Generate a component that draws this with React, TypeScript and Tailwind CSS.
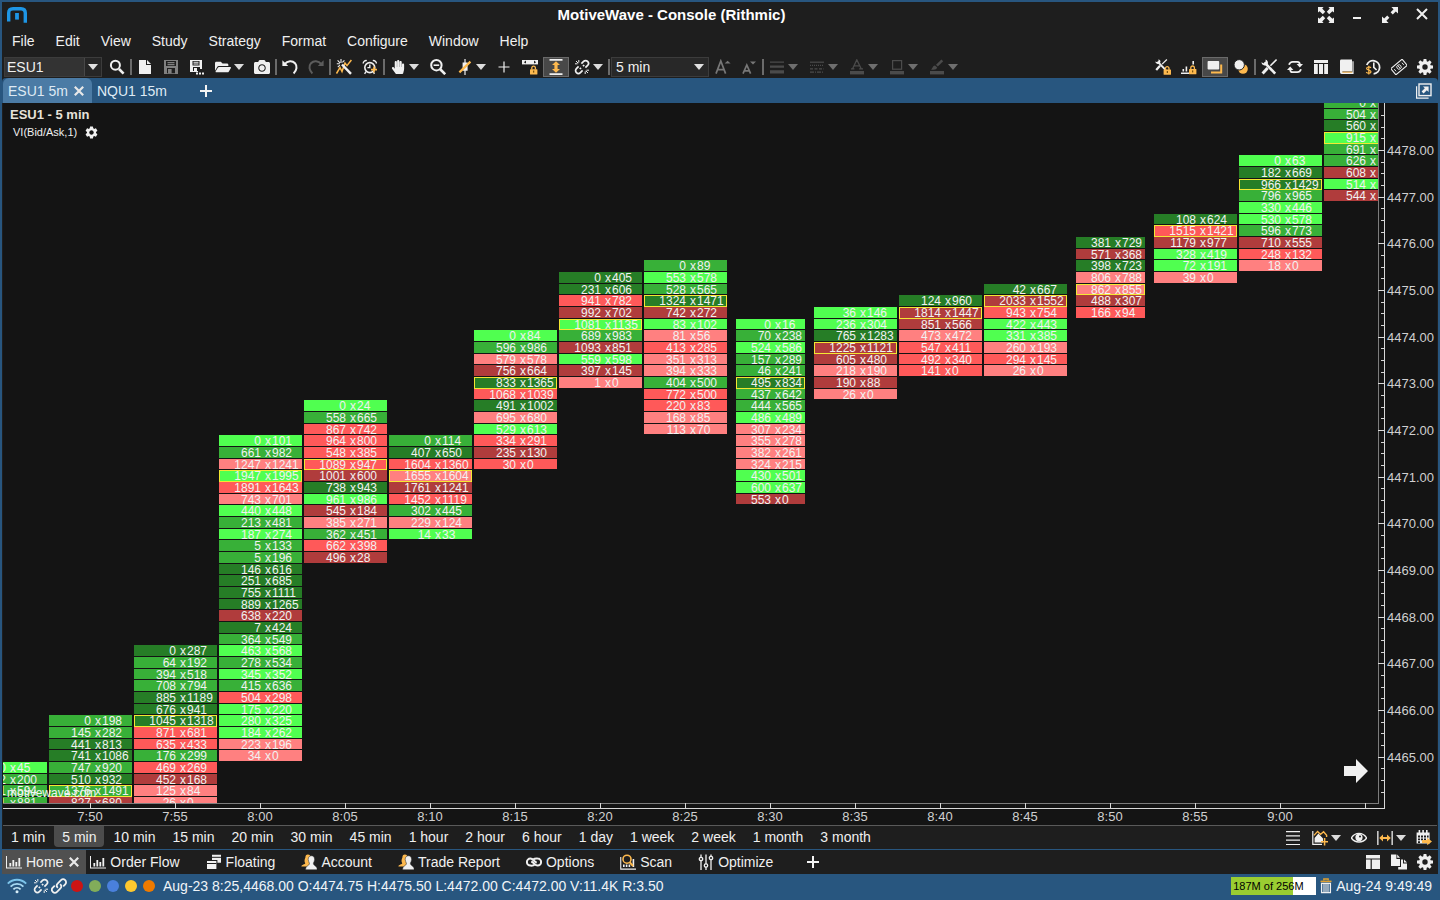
import React from 'react';
import { FaCamera, FaFolderOpen, FaHandPaper } from 'react-icons/fa';
import { MdSettings } from 'react-icons/md';

/* ------------------------------------------------------------------ data */

type Shade = 'B' | 'M' | 'D' | 'p' | 'r' | 'd';

const SHADES: Record<Shade, string> = {
  B: '#50ff50',
  M: '#38b038',
  D: '#267d26',
  p: '#ff8080',
  r: '#ff5959',
  d: '#b03c3c',
};

interface Bar {
  x: number;
  w?: number;
  row: number;
  cells: string;
}

// Each cell is "bid/ask/shade", followed by * on the row with the most volume.
const BARS: Bar[] = [
  { x: -39, row: 53, cells: '0/45/B 2/200/M 1/594/M 1/881/M' },
  { x: 46, row: 49, cells: '0/198/M 145/282/M 441/813/D 741/1086/D 747/920/M 510/932/D 1376/1491/M* 827/680/d' },
  {
    x: 131,
    row: 43,
    cells:
      '0/287/D 64/192/M 394/518/M 708/794/M 885/1189/D 676/941/D 1045/1318/D* 871/681/r 635/433/r 176/299/M 469/269/r 452/168/d 125/84/p 26/0/p',
  },
  {
    x: 216,
    row: 25,
    cells:
      '0/101/B 661/982/M 1247/1241/p 1947/1995/B* 1891/1643/r 743/701/p 440/448/B 213/481/M 187/274/B 5/133/M 5/196/M 146/616/D 251/685/D 755/1111/D 889/1265/D 638/220/d 7/424/D 364/549/M 463/568/B 278/534/M 345/352/B 415/636/M 504/298/r 175/220/B 280/325/B 184/262/B 223/196/p 34/0/p',
  },
  {
    x: 301,
    row: 22,
    cells:
      '0/24/B 558/665/M 867/742/r 964/800/r 548/385/r 1089/947/r* 1001/600/d 738/943/D 961/986/B 545/184/d 385/271/p 362/451/M 662/398/r 496/28/d',
  },
  {
    x: 386,
    row: 25,
    cells: '0/114/M 407/650/D 1604/1360/r 1655/1604/p* 1761/1241/d 1452/1119/r 302/445/M 229/124/p 14/33/B',
  },
  {
    x: 471,
    row: 16,
    cells:
      '0/84/B 596/986/M 579/578/p 756/664/d 833/1365/D* 1068/1039/r 491/1002/D 695/680/p 529/613/B 334/291/r 235/130/d 30/0/r',
  },
  {
    x: 556,
    row: 11,
    cells: '0/405/D 231/606/D 941/782/r 992/702/d 1081/1135/B* 689/983/M 1093/851/d 559/598/B 397/145/d 1/0/p',
  },
  {
    x: 641,
    row: 10,
    cells:
      '0/89/M 553/578/B 528/565/M 1324/1471/D* 742/272/d 83/102/B 81/56/p 413/285/r 351/313/p 394/333/p 404/500/M 772/500/r 220/83/r 168/85/p 113/70/p',
  },
  {
    x: 733,
    w: 69,
    row: 15,
    cells:
      '0/16/B 70/238/M 524/586/B 157/289/M 46/241/M 495/834/D* 437/642/M 444/565/M 486/489/B 307/234/p 355/278/p 382/261/p 324/215/p 430/501/B 600/637/B 553/0/d',
  },
  { x: 811, row: 14, cells: '36/146/B 236/304/B 765/1283/D 1225/1121/d* 605/480/d 218/190/p 190/88/d 26/0/p' },
  { x: 896, row: 13, cells: '124/960/D 1814/1447/d* 851/566/d 473/472/p 547/411/r 492/340/r 141/0/r' },
  { x: 981, row: 12, cells: '42/667/D 2033/1552/d* 943/754/r 422/443/B 331/385/B 260/193/p 294/145/r 26/0/p' },
  { x: 1073, w: 69, row: 8, cells: '381/729/D 571/368/d 398/723/D 806/788/p 862/855/p* 488/307/d 166/94/r' },
  { x: 1151, row: 6, cells: '108/624/D 1515/1421/r* 1179/977/d 328/419/B 72/191/B 39/0/p' },
  {
    x: 1236,
    row: 1,
    cells: '0/63/B 182/669/D 966/1429/D* 796/965/M 330/446/B 530/578/B 596/773/M 710/555/d 248/132/r 18/0/p',
  },
  { x: 1321, row: -4, cells: '0//M 504//M 560//D 915//B* 691//M 626//M 608//d 514//B 544//d' },
];

const rowTop = (row: number) => Math.floor(41.1 + (row * 35) / 3);
const rowLine = (row: number) => Math.round(47 + (row * 35) / 3);

const TIMES = ['7:50', '7:55', '8:00', '8:05', '8:10', '8:15', '8:20', '8:25', '8:30', '8:35', '8:40', '8:45', '8:50', '8:55', '9:00', ''];
const INTERVALS = ['1 min', '5 min', '10 min', '15 min', '20 min', '30 min', '45 min', '1 hour', '2 hour', '6 hour', '1 day', '1 week', '2 week', '1 month', '3 month'];
const MENUS = ['File', 'Edit', 'View', 'Study', 'Strategy', 'Format', 'Configure', 'Window', 'Help'];

/* ----------------------------------------------------------------- icons */

const LIGHT = '#f0f0f0';
const AMBER = '#fdb94e';
const DIM = '#4b4b4b';

function Svg({ children, size = 16, color = LIGHT }: { children: React.ReactNode; size?: number; color?: string }) {
  return (
    <svg width={size} height={size} viewBox="0 0 16 16" fill={color} stroke="none" className="shrink-0" aria-hidden="true">
      {children}
    </svg>
  );
}

function Gear() {
  return (
    <Svg>
      <circle cx="8" cy="8" r="4.3" fill="none" stroke={LIGHT} strokeWidth="3.2" />
      {[0, 45, 90, 135, 180, 225, 270, 315].map((a) => (
        <path key={a} d="M6.2 3 L6.6 0 H9.4 L9.8 3Z" transform={`rotate(${a} 8 8)`} />
      ))}
    </Svg>
  );
}

function Caret({ color = '#e0e0e0' }: { color?: string }) {
  return (
    <svg width="10" height="6" viewBox="0 0 10 6" fill={color} className="shrink-0" aria-hidden="true">
      <path d="M0 0H10L5 6Z" />
    </svg>
  );
}

function CloseMark({ color = '#e8e8e8' }: { color?: string }) {
  return (
    <svg width="10" height="10" viewBox="0 0 10 10" fill="none" stroke={color} strokeWidth="2.2" className="shrink-0" aria-hidden="true">
      <path d="M0.8 0.8L9.2 9.2M9.2 0.8L0.8 9.2" />
    </svg>
  );
}

function PlusMark() {
  return (
    <svg width="12" height="12" viewBox="0 0 12 12" fill="#f4f4f4" aria-hidden="true">
      <path d="M5 0h2v5h5v2H7v5H5V7H0V5h5z" />
    </svg>
  );
}

const Lock = ({ x = 8, y = 7 }: { x?: number; y?: number }) => (
  <g transform={`translate(${x} ${y})`}>
    <path d="M1.8 4V2.4a1.8 1.8 0 0 1 3.6 0V4" fill="none" stroke={AMBER} strokeWidth="1.3" />
    <rect x="0" y="3.6" width="7.4" height="5.2" rx="0.5" fill={AMBER} />
    <rect x="3.2" y="5" width="1" height="2" fill="#5a3b00" />
  </g>
);

const WifiIcon = () => (
  <svg width="20" height="16" viewBox="0 0 20 16" fill="none" strokeWidth="1.900" className="shrink-0" aria-hidden="true">
    <path d="M0.800 5.600C6 0.400 14 0.400 19.200 5.600" stroke="#7cc4ea" />
    <path d="M3.600 8.600C7.200 5 12.800 5 16.400 8.600" stroke="#a6d8f2" />
    <path d="M6.400 11.400C8.500 9.300 11.500 9.300 13.600 11.400" stroke="#c4e6f6" />
    <circle cx="10" cy="13.800" r="1.500" fill="#d8eef8" />
  </svg>
);
const BrokenLinkIcon = () => (
  <Svg>
    <g fill="none" stroke={LIGHT} strokeWidth="1.700">
      <path d="M7.400 4.600L9.600 2.400A2.700 2.700 0 0 1 13.600 6.400L11.400 8.600" />
      <path d="M10.200 6L9 7.200" />
      <path d="M8.600 11.400L6.400 13.600A2.700 2.700 0 0 1 2.400 9.600L4.600 7.400" />
      <path d="M5.800 10L7 8.800" />
      <path d="M4.800 1v2.600M1 4.800h2.600M2 2l2.200 2.200M11.200 12.400V15M12.400 11.200H15M11.800 11.800L14 14" strokeWidth="1" />
    </g>
  </Svg>
);
const LinkIcon = () => (
  <Svg>
    <g fill="none" stroke={LIGHT} strokeWidth="1.800">
      <path d="M6.800 9.800C5.200 8.200 5.400 6.800 6.600 5.600L10 2.200A2.900 2.900 0 0 1 14.200 6.400L12.200 8.400" />
      <path d="M9.200 6.200C10.800 7.800 10.600 9.200 9.400 10.400L6 13.800A2.900 2.900 0 0 1 1.800 9.600L3.800 7.600" />
    </g>
  </Svg>
);
const SearchIcon = () => (
  <Svg>
    <path d="M10 10L14.6 14.6" stroke={LIGHT} strokeWidth="2.6" />
    <circle cx="6.4" cy="6.2" r="4.5" fill="none" stroke={LIGHT} strokeWidth="2" />
  </Svg>
);
const ZoomOutIcon = () => (
  <Svg>
    <path d="M10 10L15.2 15.2" stroke={LIGHT} strokeWidth="2.6" />
    <circle cx="6.4" cy="6.2" r="5.2" fill="none" stroke={LIGHT} strokeWidth="2" />
    <path d="M3.6 5.4h5.6v1.6H3.6z" />
  </Svg>
);
const FileIcon = () => (
  <Svg>
    <path d="M2 1h7v5h5v9H2z" />
    <path d="M10 1l4 4h-4z" />
  </Svg>
);
const SaveIcon = () => (
  <Svg color="#808080">
    <path d="M1 1h14v14H1zM3 2v5h10V2zM4 9v5.2h8V9z" fillRule="evenodd" />
    <path d="M4.5 3h7v1.2h-7zM4.5 5h7v1.2h-7zM5 10h3.6v4.4H5z" />
  </Svg>
);
const SaveAsIcon = () => (
  <Svg>
    <path d="M1 1h12v9h-2V8H4v4h5v1H1zM3.5 2v4.4h7V2z" fillRule="evenodd" />
    <path d="M4.5 2.8h5v1h-5zM4.5 4.6h5v1h-5zM5 9h3v3.4H5zM7 13.5h2v2H7zM10 13.5h2v2h-2zM13 13.5h2v2h-2z" />
  </Svg>
);
const UndoIcon = ({ flip = false }: { flip?: boolean }) => (
  <Svg color={flip ? '#5c5c5c' : LIGHT}>
    <g transform={flip ? 'translate(16 0) scale(-1 1)' : undefined}>
      <path d="M0.4 1.200V7H6.2Z" />
      <path d="M2.600 5.200C5.600 1.400 10.400 1.400 13 4.200 15.400 7 15 11.400 11.600 14.400" fill="none" stroke={flip ? '#5c5c5c' : LIGHT} strokeWidth="2" />
    </g>
  </Svg>
);
const WizardIcon = () => (
  <Svg>
    <path d="M0.5 14.5L4 8.5l2 4L9 4l2 2.6L15.4 1" fill="none" stroke={AMBER} strokeWidth="1.5" />
    <path d="M6 5.5L15 14.8" stroke={LIGHT} strokeWidth="2.5" />
    <path d="M5 0v4M0.8 4.8h3M1.6 1.4l2.4 2.4M8.4 1.4L6.4 3.4M1.8 8.2l2-2" stroke={LIGHT} strokeWidth="1.1" />
  </Svg>
);
const AlarmIcon = () => (
  <Svg>
    <g fill="none" stroke={LIGHT}>
      <circle cx="7.8" cy="8.6" r="5" strokeWidth="1.6" />
      <path d="M7.8 5.6v3H5.4M1.2 4.6A3 3 0 0 1 4.8 1.6M10.8 1.6a3 3 0 0 1 3.6 3M4 12.6l-1.4 2.2M11.4 13l1 1.8" strokeWidth="1.4" />
    </g>
    <path d="M12 7.6v6M9 10.6h6" stroke={AMBER} strokeWidth="1.6" />
  </Svg>
);
const CandleIcon = () => (
  <Svg>
    <path d="M7.4 0h1.2v16H7.4zM5.6 3.4h5v8.4h-5z" />
    <path d="M2.4 13.4L13.4 2.6" stroke={AMBER} strokeWidth="2.2" />
  </Svg>
);
const CrossIcon = () => (
  <Svg>
    <path d="M7.4 2.5h1.2v4.9h4.9v1.2H8.6v4.9H7.4V8.6H2.5V7.4h4.9z" />
  </Svg>
);
const ScaleLockIcon = () => (
  <Svg>
    <rect x="0" y="1" width="16" height="4.4" />
    <path d="M4 1.6v3L1.8 3.2zM12 1.6v3l2.2-1.4z" fill="#1e1e1e" />
    <Lock x={8} y={6.6} />
  </Svg>
);
const FitHeightIcon = () => (
  <Svg>
    <path d="M1.5 0h13v1.8h-13zM1.5 14.2h13V16h-13z" />
    <path d="M8 2.2L12 6H9.6v4H12L8 13.8 4 10h2.4V6H4z" fill={AMBER} />
  </Svg>
);
const LetterUp = ({ down = false }: { down?: boolean }) => (
  <Svg color="#777777">
    <path d={down ? 'M2 14.6L5.8 6L9.6 14.6M3.4 11.8h4.8' : 'M1 14.6L5.8 2L10.6 14.6M2.6 10.6h6.6'} fill="none" stroke="#777777" strokeWidth="1.7" />
    <path d={down ? 'M9 2.6h6L12 5.4z' : 'M9.6 4.4h6L12.6 1.8z'} />
  </Svg>
);
const WidthIcon = () => (
  <Svg color={DIM}>
    <path d="M1 2.6h14v1.2H1zM1 6.6h14v2.2H1zM1 11.2h14v3.4H1z" />
  </Svg>
);
const DashIcon = () => (
  <Svg color={DIM}>
    <path d="M1 2.6h14v1.2H1z" />
    <path d="M1 6.4h14" stroke={DIM} strokeWidth="1.2" strokeDasharray="1 1" />
    <path d="M1 9.8h14" stroke={DIM} strokeWidth="1.2" strokeDasharray="3 1.5" />
    <path d="M1 13.2h14" stroke={DIM} strokeWidth="1.2" strokeDasharray="4 1 1 1" />
  </Svg>
);
const FontColorIcon = () => (
  <Svg color={DIM}>
    <path d="M3.6 9.8L7.8 0.8L12.2 9.8M5.2 6.8h5.2M2 9.8h3.4M10.2 9.8H14" fill="none" stroke={DIM} strokeWidth="1.3" />
    <path d="M1 12h14v3.4H1z" />
  </Svg>
);
const FillColorIcon = () => (
  <Svg color={DIM}>
    <rect x="3.6" y="1.6" width="9" height="8.6" fill="none" stroke={DIM} strokeWidth="1.2" />
    <path d="M1 12h14v3.4H1z" />
  </Svg>
);
const BrushColorIcon = () => (
  <Svg color={DIM}>
    <path d="M12.400 0.400L14.200 2.200 8.800 7.400 7 5.800z" />
    <path d="M6 6.600L8.200 8.600C7.400 11 4.600 11 2 10.400 3.800 9.600 3.600 6.800 6 6.600z" />
    <path d="M1 12h14v3.4H1z" />
  </Svg>
);
const Crossed = () => (
  <>
    <path d="M3.4 3.4L14.2 14.6" stroke={LIGHT} strokeWidth="2.6" />
    <path d="M0.4 3.2A3.6 3.6 0 0 0 6.6 5.4 3.6 3.6 0 0 0 4.6 0.4V3L3 4.4Z" />
    <path d="M15.6 0.6L9.4 6.8" stroke={LIGHT} strokeWidth="1.6" />
    <path d="M6.6 9L1.6 14.4" stroke={LIGHT} strokeWidth="3" />
  </>
);
const ToolsIcon = () => (
  <Svg>
    <Crossed />
  </Svg>
);
const ToolsLockIcon = () => (
  <Svg>
    <g transform="scale(0.76)">
      <Crossed />
    </g>
    <Lock x={8.6} y={7} />
  </Svg>
);
const BarsLockIcon = () => (
  <Svg>
    <path d="M0 13.6h8V15H0zM1.5 10h1.6v2.6H1.5zM4.6 7.4h1.6v5.2H4.6zM11.4 2H13v3.4h-1.6z" />
    <Lock x={8} y={6.4} />
  </Svg>
);
const LayersIcon = () => (
  <Svg>
    <path d="M4 12.4h9.2V5.4h2v9H4z" fill={AMBER} />
    <rect x="0.6" y="2" width="11.6" height="8.6" rx="0.8" />
  </Svg>
);
const CirclesIcon = () => (
  <Svg>
    <circle cx="10" cy="10" r="4.8" fill={AMBER} />
    <circle cx="6.2" cy="5.8" r="5.2" stroke="#1e1e1e" strokeWidth="1" />
  </Svg>
);
const SyncIcon = () => (
  <Svg>
    <path d="M2 5.800C2.800 3.600 4 2.800 5.600 2.800H10.400C12 2.800 12.800 3.600 12.800 5.600M14 10.200C13.200 12.400 12 13.200 10.400 13.200H5.600C4 13.200 3.200 12.400 3.200 10.400" fill="none" stroke={LIGHT} strokeWidth="1.8" />
    <path d="M9.600 5h6.400L12.800 8.600zM0 11h6.400L3.200 7.400z" />
  </Svg>
);
const ColumnsIcon = () => (
  <Svg>
    <path d="M1 1h14v3H1zM1 5h3.8v10H1zM6 5h4v10H6zM11.2 5H15v10h-3.8z" />
  </Svg>
);
const BookIcon = () => (
  <Svg>
    <path d="M2.4 0.6H13v11.8H3.4v0.8h10V2.2h1.2V15H2.6A1.8 1.8 0 0 1 1 13.2V2A1.4 1.4 0 0 1 2.4 0.6z" />
    <path d="M3.4 13.2h9.8" stroke={AMBER} strokeWidth="1" />
  </Svg>
);
const ClockMoneyIcon = () => (
  <Svg>
    <path d="M1.800 6A6.6 6.6 0 1 1 8.6 14.8" fill="none" stroke={LIGHT} strokeWidth="1.8" />
    <path d="M8.8 3.6v4.8l2.8 2.6" fill="none" stroke={LIGHT} strokeWidth="1.6" />
    <path d="M6 8.8C4.6 7.4 1.6 7.8 1.6 9.4c0 2 4.4 1.4 4.4 3.4 0 1.6-3.2 2-4.8.4M3.8 6.8V15.6" fill="none" stroke={AMBER} strokeWidth="1.2" />
  </Svg>
);
const MoneyIcon = () => (
  <Svg>
    <g transform="rotate(-40 8 8)" fill="none" stroke={LIGHT}>
      <rect x="0.600" y="4" width="14.800" height="8" strokeWidth="1.1" />
      <circle cx="8" cy="8" r="2.2" strokeWidth="0.900" />
      <path d="M3 6.600v2.800M13 6.600v2.800M8 6.4v3.2" strokeWidth="0.9" />
    </g>
  </Svg>
);
const BarChartIcon = () => (
  <Svg>
    <path d="M0 2h1v11.6h15v1H0zM3.4 9h1.8v3.4H3.4zM6.4 6h1.8v6.4H6.4zM9.4 8h1.8v4.4H9.4zM12.4 4h1.8v8.4h-1.8z" />
  </Svg>
);
const FloatingIcon = () => (
  <Svg>
    <path d="M6 0.800h9v8h-3.600V6H6z" />
    <path d="M6 2.800h9v1H6z" fill="#1e1e1e" />
    <path d="M1 7h9.4v8H1z" />
    <path d="M1 9h9.4v1H1z" fill="#1e1e1e" />
  </Svg>
);
const AccountIcon = () => (
  <Svg>
    <path d="M6.800 0.400C9 0.400 9.800 1.800 9.600 3.800 9.400 5 8.600 5.600 8.600 6.600V11L7 12.600H0.400C0.600 10.200 4.200 10.600 4.200 9.200 4 8 2.800 7.200 4.400 3.400 4.400 1.600 5.200 .4 6.800 .4z" fill={AMBER} />
    <path d="M10.400 1.800c2 0 3.200 1.400 3.200 3.600 0 1.800-1 2.800-1.200 4 .2 2.800 3.800 1.800 3.800 6.400H4.600c0-4.600 3.600-3.600 3.800-6.400-.2-1.200-1.200-2.200-1.200-4 0-2.200 1.200-3.600 3.200-3.600z" stroke="#1e1e1e" strokeWidth="0.500" />
  </Svg>
);
const OptionsIcon = () => (
  <Svg>
    <g fill="none" stroke={LIGHT} strokeWidth="2">
      <path d="M8.800 10.600C7.600 11.600 6 11.800 4.400 11.600A3.500 3.500 0 0 1 4.400 4.600C7.400 4.600 8 8.200 10.800 8.400" />
      <path d="M7.200 5.600C8.400 4.600 10 4.400 11.600 4.600A3.500 3.500 0 0 1 11.600 11.600C8.600 11.600 8 8 5.200 7.800" />
    </g>
  </Svg>
);
const ScanIcon = () => (
  <Svg>
    <path d="M0.200 3h1.100v11.600H16v1.200H0.200zM3 10.500h1.600V13H3zM5.800 10.500h1.600V13H5.800zM8.600 10.500h1.600V13H8.600zM12.600 5h1.600v8h-1.600z" />
    <circle cx="7" cy="5.200" r="4" fill="none" stroke={AMBER} strokeWidth="1.600" />
    <path d="M9.600 8.200L13 12" stroke={AMBER} strokeWidth="2" />
  </Svg>
);
const SlidersIcon = () => (
  <Svg>
    <g fill="none" stroke={LIGHT} strokeWidth="1.300">
      <path d="M3 0.500v3M3 7v9M8 0.500v9.500M8 13v3M13 0.500v2M13 6v10" />
      <circle cx="3" cy="5" r="1.700" />
      <circle cx="8" cy="11.500" r="1.700" />
      <circle cx="13" cy="4" r="1.700" />
    </g>
  </Svg>
);
const LayoutIcon = () => (
  <Svg>
    <path d="M1 1h14v3.400H1zM1 5.600h4.600V15H1zM6.800 5.600H15V15H6.800z" />
  </Svg>
);
const PagesIcon = () => (
  <Svg>
    <path d="M0 0.600h5.400V5H9v7H0z" />
    <path d="M6.200 0.600L9 3.800H6.200z" />
    <path d="M10 5.400h2V9.400h4V15.600H7.200V13H10z" />
    <path d="M13 5.400L16 8.400h-3z" />
  </Svg>
);
const ListIcon = () => (
  <Svg>
    <path d="M0 1h14v1.200H0zM0 5.300h14v1.200H0zM0 9.600h14v1.200H0zM0 13.900h14v1.200H0z" />
  </Svg>
);
const AddChartIcon = () => (
  <Svg>
    <path d="M0.200 1h1.200v12.800H10V15H0.200zM2.600 12.600V8L6.400 3.600 11 8.400V12.600z" />
    <path d="M2 5.400L5.600 1.400l3 3 3-2.600 3 3.400V7" fill="none" stroke={AMBER} strokeWidth="1.400" />
    <path d="M12.600 8v7.400M9 11.700h7" stroke={AMBER} strokeWidth="1.500" />
  </Svg>
);
const EyeIcon = () => (
  <Svg>
    <path d="M0.400 8C4 1.800 12 1.800 15.600 8 12 13.400 4 13.400 0.400 8z" fill="none" stroke={LIGHT} strokeWidth="1.400" />
    <circle cx="8" cy="7.400" r="3.600" />
    <circle cx="9" cy="6.400" r="1" fill="#1e1e1e" />
  </Svg>
);
const SpanIcon = () => (
  <Svg>
    <path d="M0.200 1h1.300v14H0.200zM14.500 1h1.300v14h-1.300z" />
    <path d="M2.200 8L6 4.400V7h4V4.400L13.800 8 10 11.600V9H6v2.600z" fill={AMBER} />
  </Svg>
);
const CalendarIcon = () => (
  <Svg>
    <path d="M0.600 2.400h13V13.600h-13z M2 5.600v1.800h2V5.600zM5 5.600v1.800h2V5.600zM8 5.600v1.800h2V5.600zM11 5.600v1.800h1.600V5.600zM2 8.400v1.800h2V8.400zM5 8.400v1.800h2V8.400zM8 8.400v1.800h2V8.400zM2 11.200V13h2v-1.800z" fillRule="evenodd" />
    <path d="M2.600 0h1.600v3H2.600zM6.300 0h1.600v3H6.300zM10 0h1.600v3H10z" />
    <path d="M6 10h5.200V7.800L16 11.500l-4.800 3.700V13H6z" fill={AMBER} />
  </Svg>
);
const PopOutIcon = () => (
  <Svg>
    <path d="M0.600 3.200V15.200H12.600" fill="none" stroke={LIGHT} strokeWidth="1.200" />
    <rect x="3" y="1" width="12" height="11.600" fill="none" stroke={LIGHT} strokeWidth="1.400" />
    <path d="M7 3.400h5.600V9L10.800 7.200 7.600 10.400 5.600 8.400 8.800 5.200z" />
  </Svg>
);
const TrashIcon = () => (
  <svg width="12" height="16" viewBox="0 0 12 16" aria-hidden="true">
    <path d="M3.800 2.500V1h4.400v1.500" fill="none" stroke="#e0a030" strokeWidth="1.300" />
    <rect x="0.500" y="2.600" width="11" height="1.600" fill="#e0a030" />
    <path d="M1.600 5.400h8.800V14.600H1.600z" fill="none" stroke="#f0f0f0" strokeWidth="1.300" />
    <path d="M4 6v8M6 6v8M8 6v8" stroke="#f0f0f0" strokeWidth="1.100" />
  </svg>
);

/* -------------------------------------------------------------- controls */

function Tool({ label, children, active = false }: { label: string; children: React.ReactNode; active?: boolean }) {
  return (
    <button
      type="button"
      aria-label={label}
      className={
        active
          ? 'flex h-5 w-[26px] shrink-0 items-center justify-center border border-[#6a6a6a] bg-[#484848] text-[#f0f0f0]'
          : 'flex h-5 w-[26px] shrink-0 items-center justify-center text-[#f0f0f0]'
      }
    >
      {children}
    </button>
  );
}

function DropTool({ label, children, dim = false }: { label: string; children: React.ReactNode; dim?: boolean }) {
  return (
    <button type="button" aria-label={label} className="flex h-5 w-[39px] shrink-0 items-center gap-[3px] pl-[5px] text-[#f0f0f0]">
      {children}
      <Caret color={dim ? '#6e6e6e' : '#dcdcdc'} />
    </button>
  );
}

const Separator = () => <div className="h-4 w-[2px] shrink-0 bg-[#6b6b6b]" />;

/* ---------------------------------------------------------------- header */

function TitleBar() {
  return (
    <header className="flex h-[26px] shrink-0 items-center">
      <div className="w-[31px] pl-[5px]">
        <svg width="20" height="16" viewBox="0 0 20 16" fill="none" stroke="#1e96e6" strokeWidth="3.400" aria-hidden="true">
          <path d="M1.700 14.600V6Q1.700 1.700 6 1.700H14Q18.300 1.700 18.300 6V15.800" />
          <path d="M10 6V12.600" strokeWidth="3.800" />
        </svg>
      </div>
      <h1 className="flex-1 text-center text-[15px] font-bold text-white">MotiveWave - Console (Rithmic)</h1>
      <div className="flex w-32 items-center justify-end gap-4 pr-2">
        <button type="button" aria-label="Full screen">
          <Svg>
            {[0, 90, 180, 270].map((a) => (
              <path key={a} d="M0 0h5.600L4.200 1.600 7.200 4.800 4.800 7.200 1.600 4.200 0 5.600z" transform={`rotate(${a} 8 8)`} />
            ))}
          </Svg>
        </button>
        <button type="button" aria-label="Minimize">
          <Svg>
            <path d="M3 10h8v2H3z" />
          </Svg>
        </button>
        <button type="button" aria-label="Maximize">
          <Svg>
            <path d="M9.400 0H16V6.600L13.800 4.400 10.800 7.400 8.600 5.200 11.600 2.200zM6.600 16H0V9.400L2.200 11.600 5.200 8.600 7.400 10.800 4.400 13.800z" />
          </Svg>
        </button>
        <button type="button" aria-label="Close">
          <Svg>
            <path d="M3 2L13 12M13 2L3 12" stroke={LIGHT} strokeWidth="2" />
          </Svg>
        </button>
      </div>
    </header>
  );
}

function MenuBar() {
  return (
    <nav className="flex h-[26px] shrink-0 items-center gap-[21px] pl-[10px] text-sm text-[#f0f0f0]">
      {MENUS.map((m) => (
        <button key={m} type="button">
          {m}
        </button>
      ))}
    </nav>
  );
}

function Toolbar() {
  return (
    <div className="flex h-6 shrink-0 items-center pt-[2px] pl-[2px]">
      <div className="mr-[2px] flex h-5 w-[98px] shrink-0 items-stretch border border-[#3c3c3c] bg-[#333333]">
        <input aria-label="Instrument" defaultValue="ESU1" className="w-[79px] min-w-0 bg-transparent pl-[2px] text-sm text-[#f0f0f0] outline-none" />
        <button type="button" aria-label="Recent instruments" className="flex flex-1 items-center justify-center border-l border-[#484848] bg-[#262626]">
          <Caret />
        </button>
      </div>
      <Tool label="Search"><SearchIcon /></Tool>
      <Separator />
      <Tool label="New"><FileIcon /></Tool>
      <Tool label="Save"><SaveIcon /></Tool>
      <Tool label="Save as"><SaveAsIcon /></Tool>
      <DropTool label="Open"><FaFolderOpen size={16} className="shrink-0" /></DropTool>
      <Tool label="Screenshot"><FaCamera size={16} /></Tool>
      <Separator />
      <Tool label="Undo"><UndoIcon /></Tool>
      <Tool label="Redo"><UndoIcon flip /></Tool>
      <Separator />
      <Tool label="Study wizard"><WizardIcon /></Tool>
      <Tool label="Add alert"><AlarmIcon /></Tool>
      <Separator />
      <div className="flex items-center gap-px">
        <DropTool label="Pan"><FaHandPaper size={14} className="mx-px shrink-0" /></DropTool>
        <Tool label="Zoom out"><ZoomOutIcon /></Tool>
        <div className="flex items-center">
          <DropTool label="Bar type"><CandleIcon /></DropTool>
          <Tool label="Crosshair"><CrossIcon /></Tool>
          <Tool label="Lock scale"><ScaleLockIcon /></Tool>
          <Tool label="Fit height" active><FitHeightIcon /></Tool>
          <DropTool label="Link"><BrokenLinkIcon /></DropTool>
        </div>
      </div>
      <Separator />
      <div className="relative mx-px h-5 w-[98px] shrink-0">
        <select aria-label="Bar size" defaultValue="5 min" className="block h-5 w-full appearance-none border border-[#3c3c3c] bg-[#282828] pb-px pl-1 text-sm leading-4 text-[#f0f0f0]">
          {INTERVALS.map((i) => (
            <option key={i}>{i}</option>
          ))}
        </select>
        <div className="pointer-events-none absolute inset-y-0 right-[5px] flex items-center">
          <Caret />
        </div>
      </div>
      <Tool label="Larger text"><LetterUp /></Tool>
      <Tool label="Smaller text"><LetterUp down /></Tool>
      <Separator />
      <div className="flex items-center gap-px">
        <DropTool label="Line width" dim><WidthIcon /></DropTool>
        <DropTool label="Line style" dim><DashIcon /></DropTool>
        <DropTool label="Text colour" dim><FontColorIcon /></DropTool>
        <DropTool label="Fill colour" dim><FillColorIcon /></DropTool>
        <DropTool label="Line colour" dim><BrushColorIcon /></DropTool>
      </div>
      <div className="ml-auto flex items-center">
        <Tool label="Lock tools"><ToolsLockIcon /></Tool>
        <Tool label="Lock bars"><BarsLockIcon /></Tool>
        <Tool label="Layers" active><LayersIcon /></Tool>
        <Tool label="Overlays"><CirclesIcon /></Tool>
        <Separator />
        <Tool label="Tools"><ToolsIcon /></Tool>
        <Tool label="Refresh"><SyncIcon /></Tool>
        <Tool label="Columns"><ColumnsIcon /></Tool>
        <Tool label="Journal"><BookIcon /></Tool>
        <Tool label="Trade history"><ClockMoneyIcon /></Tool>
        <Tool label="Trade"><MoneyIcon /></Tool>
        <Tool label="Settings"><Gear /></Tool>
      </div>
    </div>
  );
}

function ChartTabs() {
  return (
    <div className="flex h-[25px] shrink-0 items-stretch rounded-t bg-[#28567f] pl-px text-sm text-[#dfeaf4]">
      <div className="flex w-[89px] items-center gap-[6px] rounded-t-md bg-[#4b7ba5] pl-[5px]">
        <button type="button">ESU1 5m</button>
        <button type="button" aria-label="Close ESU1 5m"><CloseMark /></button>
      </div>
      <button type="button" className="ml-[5px]">NQU1 15m</button>
      <button type="button" aria-label="Add chart" className="ml-[33px] flex items-center"><PlusMark /></button>
      <button type="button" aria-label="Detach chart" className="mr-[6px] ml-auto flex items-center"><PopOutIcon /></button>
    </div>
  );
}

/* ----------------------------------------------------------------- chart */

function Footprint({ bar }: { bar: Bar }) {
  const w = bar.w ?? 83;
  const mid = bar.x + Math.floor(w / 2);
  return (
    <g>
      {bar.cells.split(' ').map((cell, i) => {
        const peak = cell.endsWith('*');
        const [bid, ask, shade] = cell.replace('*', '').split('/');
        const top = rowTop(bar.row + i);
        const h = rowTop(bar.row + i + 1) - top - 1;
        return (
          <g key={i}>
            <rect x={bar.x} y={top} width={w} height={h} fill={SHADES[shade as Shade]} />
            {peak && <rect x={bar.x + 0.5} y={top + 0.5} width={w - 1} height={h} fill="none" stroke="#f4e832" />}
            <text y={top + 10} fill="#f2f2f2" fontSize="12">
              <tspan x={mid + 1} textAnchor="end">{bid}</tspan>
              <tspan x={mid + 5} textAnchor="start">x</tspan>
              <tspan x={mid + 12} textAnchor="start">{ask}</tspan>
            </text>
          </g>
        );
      })}
    </g>
  );
}

function PriceAxis() {
  const rows = Array.from({ length: 59 }, (_, i) => i - 3);
  return (
    <svg className="block h-full w-full" fontSize="13" fill="#d0d0d0" shapeRendering="crispEdges">
      <rect x="0" y="0" width="1" height="100%" fill="#7c7c7c" />
      <rect x="6" y="0" width="1" height="100%" fill="#d8d8d8" />
      {rows.map((r) =>
        r % 4 === 0 ? (
          <g key={r}>
            <rect x="0" y={rowLine(r)} width="6" height="1" fill="#d8d8d8" />
            <text x="9" y={rowLine(r) + 5}>{(4478 - r / 4).toFixed(2)}</text>
          </g>
        ) : (
          <rect key={r} x="3" y={rowLine(r)} width="3" height="1" fill="#d8d8d8" />
        ),
      )}
    </svg>
  );
}

function TimeAxis() {
  return (
    <svg className="block h-full w-full" fontSize="13" fill="#d0d0d0" textAnchor="middle" shapeRendering="crispEdges">
      <rect x="0" y="0" width="100%" height="1" fill="#7c7c7c" />
      <rect x="0" y="5" width="100%" height="1" fill="#d8d8d8" />
      {TIMES.map((t, i) => (
        <g key={i}>
          <rect x={87 + i * 85} y="0" width="1" height="5" fill="#d8d8d8" />
          {t && <text x={87 + i * 85} y="18">{t}</text>}
        </g>
      ))}
    </svg>
  );
}

function Chart() {
  return (
    <main className="mx-px grid min-h-0 flex-1 grid-cols-[minmax(0,1fr)_59px] grid-rows-[minmax(0,1fr)_22px] border-b border-[#5a5a5a] bg-[#141414]">
      <div className="relative min-h-0 overflow-hidden">
        <svg className="block h-full w-full" aria-label="ESU1 volume imprint">
          {BARS.map((b) => (
            <Footprint key={b.x} bar={b} />
          ))}
          <text x="4" y="694" fontSize="12" fill="#f2f2f2">motivewave.com</text>
        </svg>
        <div className="absolute top-1 left-[7px] text-[#e6e2da]">
          <h2 className="text-[13px] leading-4 font-bold">ESU1 - 5 min</h2>
          <div className="flex items-center gap-[7px] pl-[3px] text-[11px] leading-[18px] text-[#f0f0f0]">
            VI(Bid/Ask,1)
            <button type="button" aria-label="Study settings"><MdSettings size={15} /></button>
          </div>
        </div>
        <button type="button" aria-label="Jump to latest bar" className="absolute right-[10px] bottom-5">
          <svg width="24" height="24" viewBox="0 0 24 24" fill="#f0f0f0" aria-hidden="true">
            <path d="M0 7H12V0L24 12L12 24V17H0Z" />
          </svg>
        </button>
      </div>
      <div className="min-h-0 overflow-hidden">
        <PriceAxis />
      </div>
      <TimeAxis />
      <svg className="block h-full w-full" shapeRendering="crispEdges" aria-hidden="true">
        <rect x="0" y="0" width="1" height="1" fill="#7c7c7c" />
        <path d="M6 0h1v6H0V5h6z" fill="#d8d8d8" />
      </svg>
    </main>
  );
}

/* ---------------------------------------------------------------- footer */

function IntervalBar() {
  return (
    <div className="mx-px flex h-[23px] shrink-0 items-stretch gap-px text-sm text-[#f0f0f0]">
      {INTERVALS.map((t) => (
        <button key={t} type="button" className={t === '5 min' ? 'mb-[2px] rounded-b bg-[#4c4c4c] px-2' : 'mb-[2px] px-2'}>
          {t}
        </button>
      ))}
      <div className="ml-auto flex items-center">
        <Tool label="List"><ListIcon /></Tool>
        <DropTool label="Add study"><AddChartIcon /></DropTool>
        <Tool label="Visibility"><EyeIcon /></Tool>
        <DropTool label="Bar spacing"><SpanIcon /></DropTool>
        <Tool label="Go to date"><CalendarIcon /></Tool>
      </div>
    </div>
  );
}

const PAGES: { name: string; icon: React.ReactNode }[] = [
  { name: 'Home', icon: <BarChartIcon /> },
  { name: 'Order Flow', icon: <BarChartIcon /> },
  { name: 'Floating', icon: <FloatingIcon /> },
  { name: 'Account', icon: <AccountIcon /> },
  { name: 'Trade Report', icon: <AccountIcon /> },
  { name: 'Options', icon: <OptionsIcon /> },
  { name: 'Scan', icon: <ScanIcon /> },
  { name: 'Optimize', icon: <SlidersIcon /> },
];

function PageTabs() {
  return (
    <nav className="flex h-6 shrink-0 items-stretch text-sm text-[#f0f0f0]">
      {PAGES.map(({ name, icon }, i) => (
        <div key={name} className={i === 0 ? 'flex items-center bg-[#505050] pr-px pl-1' : 'flex items-center pl-1'}>
          <button type="button" className="flex items-center gap-1">
            {icon}
            {name}
          </button>
          <div className="flex w-[22px] items-center pl-[6px]">
            {i === 0 && (
              <button type="button" aria-label="Close Home"><CloseMark /></button>
            )}
          </div>
        </div>
      ))}
      <button type="button" aria-label="Add page" className="ml-3 flex items-center"><PlusMark /></button>
      <div className="ml-auto flex items-center">
        <Tool label="Page layout"><LayoutIcon /></Tool>
        <Tool label="Copy page"><PagesIcon /></Tool>
        <Tool label="Page settings"><Gear /></Tool>
      </div>
    </nav>
  );
}

function StatusBar() {
  return (
    <footer className="flex h-[26px] shrink-0 items-center bg-[#28567f] pr-2 pb-[2px] pl-[7px] text-sm text-[#f0f4f8]">
      <WifiIcon />
      <div className="ml-[6px] flex items-center gap-[2px]">
        <BrokenLinkIcon />
        <LinkIcon />
      </div>
      <div className="ml-1 flex gap-[6px]">
        <span className="size-3 rounded-full bg-[#cc1414]" />
        <span className="size-3 rounded-full bg-[#82ad5a]" />
        <span className="size-3 rounded-full bg-[#4a80dc]" />
        <span className="size-3 rounded-full bg-[#fdc82f]" />
        <span className="size-3 rounded-full bg-[#ee7a00]" />
      </div>
      <p className="ml-2 whitespace-nowrap">Aug-23 8:25,4468.00 O:4474.75 H:4475.50 L:4472.00 C:4472.00 V:11.4K R:3.50</p>
      <div className="ml-auto h-[18px] w-[85px] bg-[linear-gradient(to_right,#9acd32_73%,#ffffff_73%)] pl-[2px] text-[11px] leading-[18px] whitespace-nowrap text-black">
        187M of 256M
      </div>
      <button type="button" aria-label="Free memory" className="mx-1"><TrashIcon /></button>
      <time>Aug-24 9:49:49</time>
    </footer>
  );
}

export default function App() {
  return (
    <div className="flex h-screen flex-col overflow-hidden bg-[#28567f] font-['Liberation_Sans',Arial,sans-serif]">
      <div className="mx-[2px] mt-[2px] flex min-h-0 flex-1 flex-col bg-[#1e1e1e]">
        <TitleBar />
        <MenuBar />
        <Toolbar />
        <ChartTabs />
        <Chart />
        <IntervalBar />
        <div className="h-px shrink-0 bg-[#28567f]" />
        <PageTabs />
      </div>
      <StatusBar />
    </div>
  );
}
